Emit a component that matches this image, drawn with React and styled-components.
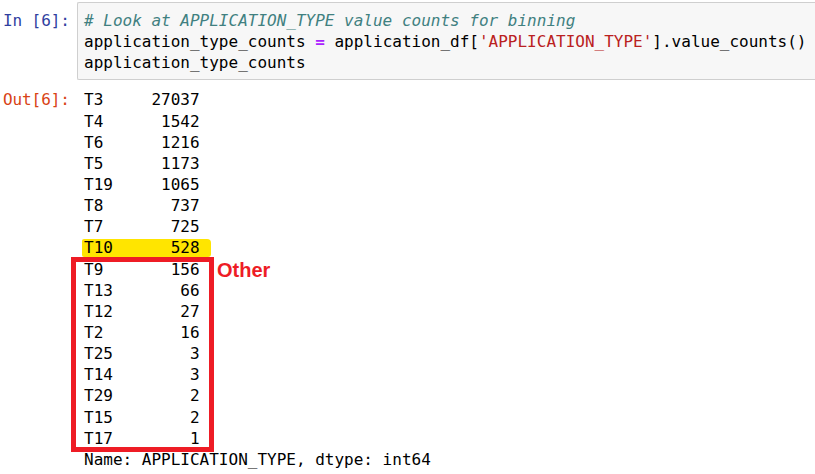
import React from 'react'
import styled, { createGlobalStyle } from 'styled-components'

const Global = createGlobalStyle`
  html, body {
    margin: 0;
    background: #fff;
    overflow: hidden;
  }
`

// una celda de notebook: prompt + contenido
const Cell = styled.div`
  display: flex;
  align-items: flex-start;
  font-family: "DejaVu Sans Mono", "Liberation Mono", monospace;
  font-size: 16px;
  line-height: 21.15px;
  padding-top: ${({pt}) => pt || 0}px;
`

const Prompt = styled.div`
  flex: 0 0 77px;
  box-sizing: border-box;
  padding-left: 3px;
  padding-top: ${({pt}) => pt || 0}px;
  color: ${({out}) => (out ? '#D84315' : '#303F9F')};
  white-space: pre;
  letter-spacing: -0.1px;
`

// caja de codigo, se corta en el borde derecho como en la captura
const CodeBox = styled.pre`
  margin: 0;
  flex: 1;
  min-width: 0;
  box-sizing: border-box;
  background: #f7f7f7;
  border: 1px solid #cfcfcf;
  border-right: none;
  border-radius: 2px 0 0 2px;
  padding: 7px 6px 6px;
  font: inherit;
  color: #000;
  overflow: hidden;
`

const Comment = styled.span`
  color: #408080;
  font-style: italic;
`
const Op = styled.span`
  color: #AA22FF;
  font-weight: bold;
`
const Str = styled.span`
  color: #BA2121;
`

const Output = styled.div`
  padding-left: 7px;
  color: #000;
  white-space: pre;
`

const Row = styled.div`
  height: 21.15px;
`

const Marked = styled.span`
  display: inline-block;
  margin-left: -2px;
  padding: 0 11px 0 2px;
  height: 18px;
  line-height: 18px;
  margin-top: 1px;
  background: #ffe500;
  border-radius: 2px 4px 3px 2px;
`

// grupo encerrado en rojo
const Group = styled.div`
  position: relative;
  width: fit-content;
`

const Frame = styled.div`
  position: absolute;
  top: -2px;
  left: -13px;
  right: -14px;
  bottom: -3px;
  border: 5px solid #ee1c25;
  pointer-events: none;
`

const Label = styled.span`
  position: absolute;
  left: 133px;
  top: -1px;
  font-family: "Liberation Sans", Arial, sans-serif;
  font-weight: bold;
  font-size: 20px;
  line-height: 24px;
  color: #ee1c25;
`

const top = [
  ['T3', '27037'],
  ['T4', '1542'],
  ['T6', '1216'],
  ['T5', '1173'],
  ['T19', '1065'],
  ['T8', '737'],
  ['T7', '725'],
]

const other = [
  ['T9', '156'],
  ['T13', '66'],
  ['T12', '27'],
  ['T2', '16'],
  ['T25', '3'],
  ['T14', '3'],
  ['T29', '2'],
  ['T15', '2'],
  ['T17', '1'],
]

const line = ([k, v]) => k.padEnd(12 - v.length, ' ') + v

export default function App() {
  return (
    <>
      <Global />
      <Cell pt={2}>
        <Prompt pt={8}>In [6]:</Prompt>
        <CodeBox>
          <Comment># Look at APPLICATION_TYPE value counts for binning</Comment>{'\n'}
          application_type_counts <Op>=</Op> application_df[<Str>'APPLICATION_TYPE'</Str>].value_counts(){'\n'}
          application_type_counts
        </CodeBox>
      </Cell>
      <Cell pt={9}>
        <Prompt out>Out[6]:</Prompt>
        <Output>
          {top.map(r => <Row key={r[0]}>{line(r)}</Row>)}
          <Row><Marked>{line(['T10', '528'])}</Marked></Row>
          <Group>
            {other.map(r => <Row key={r[0]}>{line(r)}</Row>)}
            <Frame />
            <Label>Other</Label>
          </Group>
          <Row>Name: APPLICATION_TYPE, dtype: int64</Row>
        </Output>
      </Cell>
    </>
  )
}
